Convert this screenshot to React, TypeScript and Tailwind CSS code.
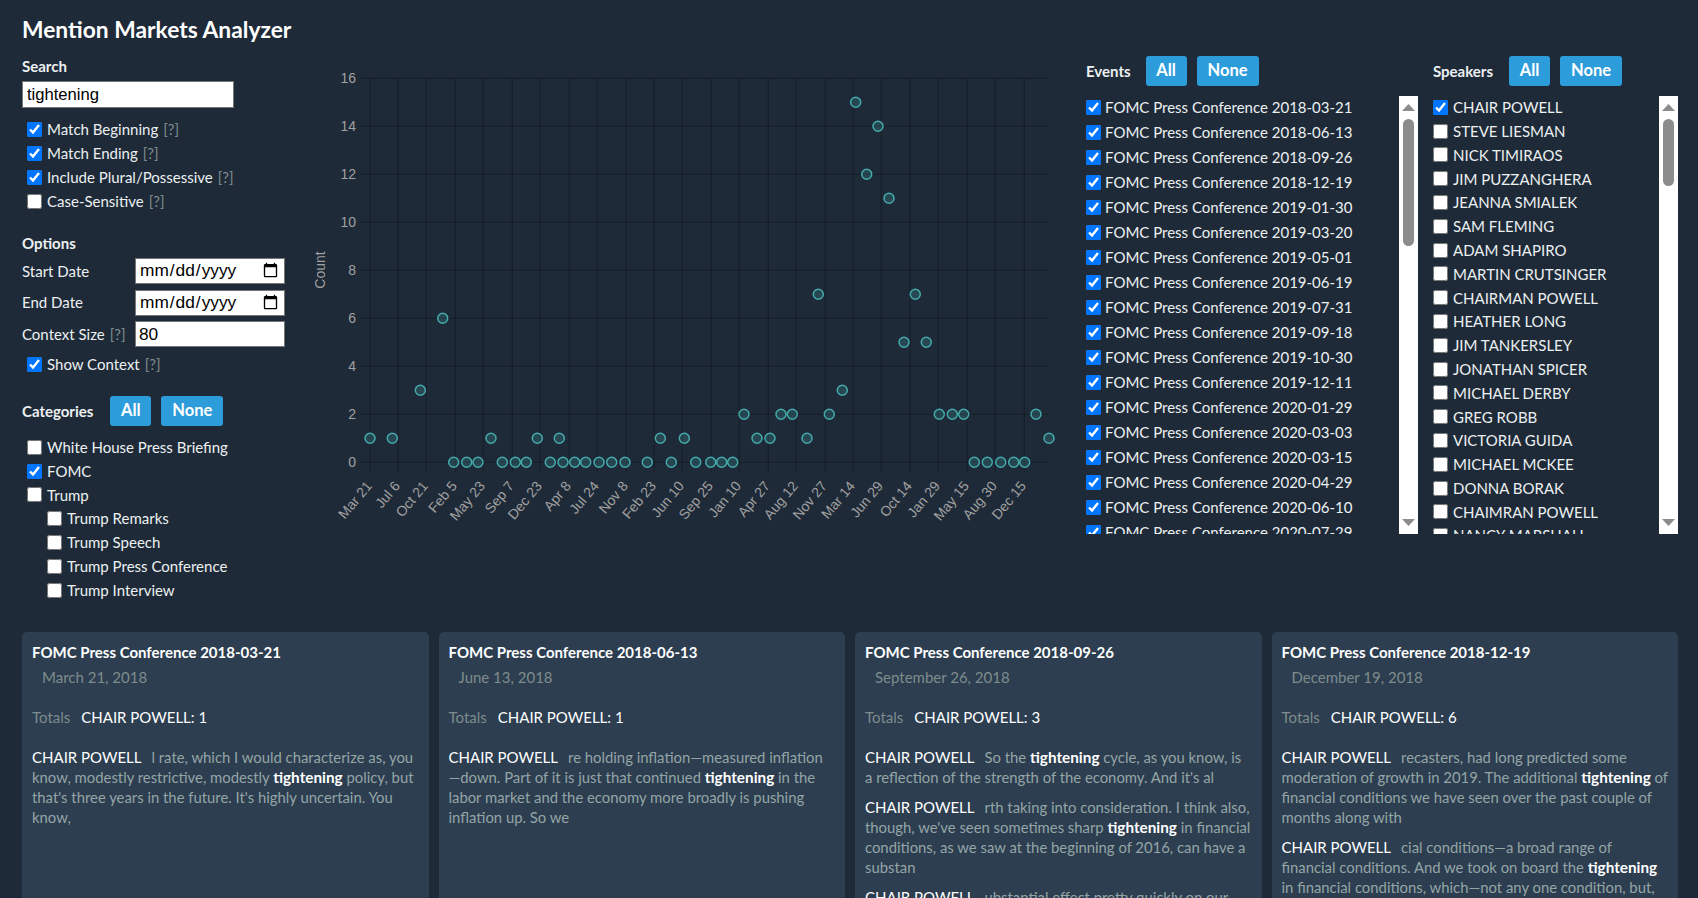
const labels = ["Mar 21","Jul 6","Oct 21","Feb 5","May 23","Sep 7","Dec 23","Apr 8","Jul 24","Nov 8","Feb 23","Jun 10","Sep 25","Jan 10","Apr 27","Aug 12","Nov 27","Mar 14","Jun 29","Oct 14","Jan 29","May 15","Aug 30","Dec 15"];
const gridX = [370.3,398.3,426.3,455.3,483.3,512.3,540.3,569.3,597.3,626.3,654.3,682.3,711.3,739.3,768.3,796.3,825.3,853.3,881.3,910.3,938.3,967.3,995.3,1024.3];
const points: [number, number][] = [
  [370,1],[392.3,1],[420.3,3],[442.7,6],[453.7,0],[466.7,0],[478,0],[491,1],[502.3,0],[515.3,0],[526.3,0],[537.3,1],[550.3,0],[559.3,1],[563,0],[574.7,0],[585.7,0],[599,0],[611.7,0],[625,0],[647.3,0],[660.3,1],[671.3,0],[684.3,1],[695.7,0],
  [710.7,0],[721.7,0],[732.7,0],[744,2],[757,1],[770,1],[781,2],[792.3,2],[807,1],[818.3,7],[829.3,2],[842.3,3],[855.7,15],[866.7,12],[878,14],[889,11],[904,5],[915.3,7],[926.3,5],[939.3,2],[952.3,2],[963.7,2],[974.3,0],[987.3,0],[1000.7,0],[1013.7,0],[1024.7,0],[1036,2],[1049,1],
];
const events = ["2018-03-21","2018-06-13","2018-09-26","2018-12-19","2019-01-30","2019-03-20","2019-05-01","2019-06-19","2019-07-31","2019-09-18","2019-10-30","2019-12-11","2020-01-29","2020-03-03","2020-03-15","2020-04-29","2020-06-10","2020-07-29"];
const speakers = ["CHAIR POWELL","STEVE LIESMAN","NICK TIMIRAOS","JIM PUZZANGHERA","JEANNA SMIALEK","SAM FLEMING","ADAM SHAPIRO","MARTIN CRUTSINGER","CHAIRMAN POWELL","HEATHER LONG","JIM TANKERSLEY","JONATHAN SPICER","MICHAEL DERBY","GREG ROBB","VICTORIA GUIDA","MICHAEL MCKEE","DONNA BORAK","CHAIMRAN POWELL","NANCY MARSHALL"];

const yOf = (v:number) => 462.3 - 24*v;

function Chart(){
  return (
    <svg viewBox="310 50 776 520" width={776} height={520} className="shrink-0 block">
      {[0,2,4,6,8,10,12,14,16].map(v=>(
        <g key={v}>
          <line x1={360} x2={1049} y1={yOf(v)} y2={yOf(v)} stroke="rgba(0,0,0,0.28)" />
          <text x={356} y={yOf(v)+5} textAnchor="end" fontSize={14} fontFamily="'Liberation Sans', sans-serif" fill="#a0a0a0">{v}</text>
        </g>
      ))}
      {gridX.map((x,i)=>(
        <g key={i}>
          <line x1={x} x2={x} y1={78.3} y2={472} stroke="rgba(0,0,0,0.28)" />
          <text transform={`translate(${x+2.4} 486.4) rotate(-50)`} textAnchor="end" fontSize={14} fontFamily="'Liberation Sans', sans-serif" fill="#a0a0a0">{labels[i]}</text>
        </g>
      ))}
      <text transform="translate(325 270) rotate(-90)" textAnchor="middle" fontSize={14} fontFamily="'Liberation Sans', sans-serif" fill="#a0a0a0">Count</text>
      {points.map(([x,v],i)=>(
        <circle key={i} cx={x} cy={yOf(v)} r={5} fill="rgba(75,192,192,0.2)" stroke="rgb(75,192,192)" strokeOpacity={0.85} strokeWidth={1.5} />
      ))}
    </svg>
  );
}

function Check({label, checked, hint, indent, tall}:{label:string, checked?:boolean, hint?:boolean, indent?:boolean, tall?:boolean}){
  return (
    <label className={`flex items-center gap-[5px] whitespace-nowrap ${tall? 'h-[24px]':'h-[23.8px]'} ${indent? 'ml-[25px]':'ml-[5px]'}`}>
      <input type="checkbox" defaultChecked={checked} className="w-[15px] h-[15px] shrink-0" />
      <span>{label}{hint && <Hint />}</span>
    </label>
  );
}
function Hint(){
  return <span className="ml-[5px] text-[#7f8c8d]">[?]</span>;
}
function BtnHeader({title, gap}:{title:string, gap:string}){
  return (
    <div className="flex items-center h-[30px] gap-[10px]">
      <span className={`font-bold ${gap}`}>{title}</span>
      <button className="h-[30px] w-[41px] rounded-[3px] bg-[#2d9cdb] text-white font-bold text-[16.5px] leading-[26px] pb-[2px]">All</button>
      <button className="h-[30px] w-[62px] rounded-[3px] bg-[#2d9cdb] text-white font-bold text-[16.5px] leading-[26px] pb-[2px]">None</button>
    </div>
  );
}
function Scrollbar({thumb}:{thumb:number}){
  return (
    <div className="w-[19px] shrink-0 bg-white flex flex-col items-center pt-[8px] pb-[8px]">
      <svg width="13" height="7" viewBox="0 0 13 7" className="shrink-0"><path d="M6.5 0L13 7H0z" fill="#8c8c8c" /></svg>
      <div className="w-[11px] mt-[8px] rounded-full bg-[#8c8c8c]" style={{height:thumb}} />
      <div className="flex-1" />
      <svg width="13" height="7" viewBox="0 0 13 7" className="shrink-0"><path d="M0 0H13L6.5 7z" fill="#8c8c8c" /></svg>
    </div>
  );
}
function DateRow({label}:{label:string}){
  return (
    <div className="flex items-center h-[26px]">
      <span className="w-[113px] shrink-0">{label}</span>
      <input type="date" className="w-[150px] h-[26px] bg-white text-black border border-[#767676] px-[3px] text-[17.3px] font-['Liberation_Sans',sans-serif]" />
    </div>
  );
}
function Sidebar(){
  return (
    <div className="w-[310px] shrink-0 pl-[22px] flex flex-col">
      <div className="mt-[6px] h-[20px] leading-[20px] font-bold">Search</div>
      <input defaultValue="tightening" className="mt-[5px] w-[212px] h-[27px] bg-white text-black border border-[#767676] px-[4px] text-[16.6px] font-['Liberation_Sans',sans-serif]" />
      <div className="mt-[9px]">
        <Check label="Match Beginning" checked hint tall />
        <Check label="Match Ending" checked hint tall />
        <Check label="Include Plural/Possessive" checked hint tall />
        <Check label="Case-Sensitive" hint tall />
      </div>
      <div className="mt-[20px] h-[20px] leading-[20px] font-bold">Options</div>
      <div className="mt-[5px] flex flex-col gap-[5.67px]">
        <DateRow label="Start Date" />
        <DateRow label="End Date" />
        <div className="flex items-center h-[26px]">
          <span className="w-[113px] shrink-0">Context Size<Hint /></span>
          <input defaultValue="80" className="w-[150px] h-[26px] bg-white text-black border border-[#767676] px-[3px] text-[17.3px] font-['Liberation_Sans',sans-serif]" />
        </div>
      </div>
      <div className="mt-[5px]"><Check label="Show Context" checked hint /></div>
      <div className="mt-[20px]"><BtnHeader title="Categories" gap="mr-[7px]" /></div>
      <div className="mt-[9.3px]">
        <Check label="White House Press Briefing" />
        <Check label="FOMC" checked />
        <Check label="Trump" />
        <Check label="Trump Remarks" indent />
        <Check label="Trump Speech" indent />
        <Check label="Trump Press Conference" indent />
        <Check label="Trump Interview" indent />
      </div>
    </div>
  );
}
function Picker({title, gap, width, thumb, children}:{title:string, gap:string, width:string, thumb:number, children:React.ReactNode}){
  return (
    <div className={`${width} shrink-0`}>
      <div className="mt-[6px]"><BtnHeader title={title} gap={gap} /></div>
      <div className="mt-[10px] h-[438px] flex">
        <div className="flex-1 min-w-0 overflow-hidden">{children}</div>
        <Scrollbar thumb={thumb} />
      </div>
    </div>
  );
}
function Para({children}:{children:React.ReactNode}){
  return <div className="text-[#95a5a6] text-[14.85px] leading-[20px]"><span className="text-white text-[15px] mr-[10px]">CHAIR POWELL</span>{children}</div>;
}
const T = ()=><b className="text-white font-bold text-[15.3px]">tightening</b>;
function Card({title, date, total, children}:{title:string, date:string, total:number, children:React.ReactNode}){
  return (
    <div className="bg-[#2c3e50] rounded-[5px] p-[10px] pb-0 min-h-[300px]">
      <div className="font-bold text-white leading-[20px]">{title}</div>
      <div className="mt-[5px] pl-[10px] leading-[20px] text-[#7f8c8d]">{date}</div>
      <div className="mt-[20px] leading-[20px] text-[#7f8c8d]"><span className="mr-[11px]">Totals</span><span className="text-white">CHAIR POWELL: {total}</span></div>
      <div className="mt-[20px] flex flex-col gap-[10px]">{children}</div>
    </div>
  );
}

export default function App(){
  return (
    <div className="h-[898px] overflow-hidden bg-[#1e2a38] text-[#ecf0f1] text-[15px] font-['Lato',sans-serif]">
      <h1 className="h-[50px] pt-[13px] pl-[22px] text-[22.8px] leading-[32px] font-bold text-white">Mention Markets Analyzer</h1>
      <div className="flex">
        <Sidebar />
        <Chart />
        <Picker title="Events" gap="mr-[5px]" width="w-[332px]" thumb={127}>
          {events.map(e=>(
            <label key={e} className="h-[25px] flex items-center gap-[4px] whitespace-nowrap first:mt-[-1px]">
              <input type="checkbox" defaultChecked className="w-[15px] h-[15px] shrink-0" />
              <span>FOMC Press Conference {e}</span>
            </label>
          ))}
        </Picker>
        <div className="w-[15px] shrink-0" />
        <Picker title="Speakers" gap="mr-[6px]" width="w-[245px]" thumb={67}>
          {speakers.map((s,i)=>(
            <label key={s} className="h-[23.8px] flex items-center gap-[5px] whitespace-nowrap first:mt-[-0.5px]">
              <input type="checkbox" defaultChecked={i===0} className="w-[15px] h-[15px] shrink-0" />
              <span>{s}</span>
            </label>
          ))}
        </Picker>
      </div>
      <div className="mt-[30px] pl-[22px] pr-[20px] grid grid-cols-4 gap-[10px]">
        <Card title="FOMC Press Conference 2018-03-21" date="March 21, 2018" total={1}>
          <Para>l rate, which I would characterize as, you know, modestly restrictive, modestly <T /> policy, but that's three years in the future. It's highly uncertain. You know,</Para>
        </Card>
        <Card title="FOMC Press Conference 2018-06-13" date="June 13, 2018" total={1}>
          <Para>re holding inflation—measured inflation<br />—down. Part of it is just that continued <T /> in the labor market and the economy more broadly is pushing inflation up. So we</Para>
        </Card>
        <Card title="FOMC Press Conference 2018-09-26" date="September 26, 2018" total={3}>
          <Para>So the <T /> cycle, as you know, is a reflection of the strength of the economy. And it's al</Para>
          <Para>rth taking into consideration. I think also, though, we've seen sometimes sharp <T /> in financial conditions, as we saw at the beginning of 2016, can have a substan</Para>
          <Para>ubstantial effect pretty quickly on our</Para>
        </Card>
        <Card title="FOMC Press Conference 2018-12-19" date="December 19, 2018" total={6}>
          <Para>recasters, had long predicted some moderation of growth in 2019. The additional <T /> of financial conditions we have seen over the past couple of months along with</Para>
          <Para>cial conditions—a broad range of financial conditions. And we took on board the <T /> in financial conditions, which—not any one condition, but,</Para>
        </Card>
      </div>
    </div>
  );
}
